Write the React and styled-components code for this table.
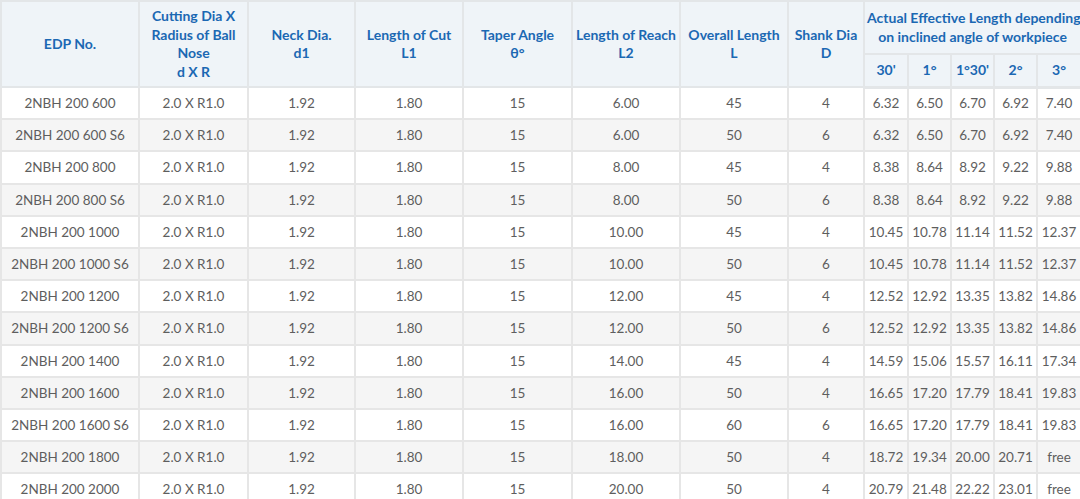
import React from "react";
import styled, { createGlobalStyle } from "styled-components";

const GlobalStyle = createGlobalStyle`
  body {
    margin: 0;
    background: #ffffff;
    font-family: Lato, "Noto Sans", sans-serif;
    overflow: hidden;
  }
`;

const Wrap = styled.div`
  width: 1080px;
  overflow: hidden;
`;

const Table = styled.table`
  width: 1080px;
  table-layout: fixed;
  border-collapse: collapse;
  font-size: 13.5px;
`;

const HeadRow = styled.tr`
  height: ${(p) => (p.$sub ? "33px" : "53px")};
`;

const Th = styled.th`
  background: #eff4f8;
  color: #1b68b3;
  font-size: 14px;
  font-weight: 700;
  text-align: center;
  vertical-align: middle;
  line-height: 18.5px;
  padding: 0 2px;
  border: 2px solid #e3e6e8;
  border-bottom-width: ${(p) => (p.$sub ? "3px" : "2px")};
  white-space: ${(p) => (p.$nowrap ? "nowrap" : "normal")};
`;

const Tr = styled.tr`
  background: ${(p) => (p.$alt ? "#f5f5f5" : "#ffffff")};
  height: 32.2px;
`;

const Td = styled.td`
  color: #5e5e5e;
  text-align: center;
  vertical-align: middle;
  padding: 0 2px;
  border: 2px solid #e6e6e6;
  white-space: nowrap;
`;

const widths = [138, 109, 107, 108, 109, 108, 108, 76, 44, 43, 43, 43, 44];

const rows = [
  ["2NBH 200 600", "6.00", "45", "4", ["6.32", "6.50", "6.70", "6.92", "7.40"]],
  ["2NBH 200 600 S6", "6.00", "50", "6", ["6.32", "6.50", "6.70", "6.92", "7.40"]],
  ["2NBH 200 800", "8.00", "45", "4", ["8.38", "8.64", "8.92", "9.22", "9.88"]],
  ["2NBH 200 800 S6", "8.00", "50", "6", ["8.38", "8.64", "8.92", "9.22", "9.88"]],
  ["2NBH 200 1000", "10.00", "45", "4", ["10.45", "10.78", "11.14", "11.52", "12.37"]],
  ["2NBH 200 1000 S6", "10.00", "50", "6", ["10.45", "10.78", "11.14", "11.52", "12.37"]],
  ["2NBH 200 1200", "12.00", "45", "4", ["12.52", "12.92", "13.35", "13.82", "14.86"]],
  ["2NBH 200 1200 S6", "12.00", "50", "6", ["12.52", "12.92", "13.35", "13.82", "14.86"]],
  ["2NBH 200 1400", "14.00", "45", "4", ["14.59", "15.06", "15.57", "16.11", "17.34"]],
  ["2NBH 200 1600", "16.00", "50", "4", ["16.65", "17.20", "17.79", "18.41", "19.83"]],
  ["2NBH 200 1600 S6", "16.00", "60", "6", ["16.65", "17.20", "17.79", "18.41", "19.83"]],
  ["2NBH 200 1800", "18.00", "50", "4", ["18.72", "19.34", "20.00", "20.71", "free"]],
  ["2NBH 200 2000", "20.00", "50", "4", ["20.79", "21.48", "22.22", "23.01", "free"]],
];

const angles = ["30'", "1°", "1°30'", "2°", "3°"];

export default function App() {
  return (
    <Wrap>
      <GlobalStyle />
      <Table>
        <colgroup>
          {widths.map((w, i) => (
            <col key={i} style={{ width: w }} />
          ))}
        </colgroup>
        <thead>
          <HeadRow>
            <Th rowSpan={2}>EDP No.</Th>
            <Th rowSpan={2}>
              Cutting Dia X<br />Radius of Ball<br />Nose<br />d X R
            </Th>
            <Th rowSpan={2}>
              Neck Dia.<br />d1
            </Th>
            <Th rowSpan={2}>
              Length of Cut<br />L1
            </Th>
            <Th rowSpan={2}>
              Taper Angle<br />θ°
            </Th>
            <Th rowSpan={2} $nowrap>
              Length of Reach<br />L2
            </Th>
            <Th rowSpan={2} $nowrap>
              Overall Length<br />L
            </Th>
            <Th rowSpan={2}>
              Shank Dia<br />D
            </Th>
            <Th colSpan={5} $nowrap>
              Actual Effective Length depending<br />on inclined angle of workpiece
            </Th>
          </HeadRow>
          <HeadRow $sub>
            {angles.map((a) => (
              <Th key={a} $sub>
                {a}
              </Th>
            ))}
          </HeadRow>
        </thead>
        <tbody>
          {rows.map(([edp, reach, overall, shank, eff], i) => (
            <Tr key={edp} $alt={i % 2 === 1}>
              <Td>{edp}</Td>
              <Td>2.0 X R1.0</Td>
              <Td>1.92</Td>
              <Td>1.80</Td>
              <Td>15</Td>
              <Td>{reach}</Td>
              <Td>{overall}</Td>
              <Td>{shank}</Td>
              {eff.map((v, j) => (
                <Td key={j}>{v}</Td>
              ))}
            </Tr>
          ))}
        </tbody>
      </Table>
    </Wrap>
  );
}
